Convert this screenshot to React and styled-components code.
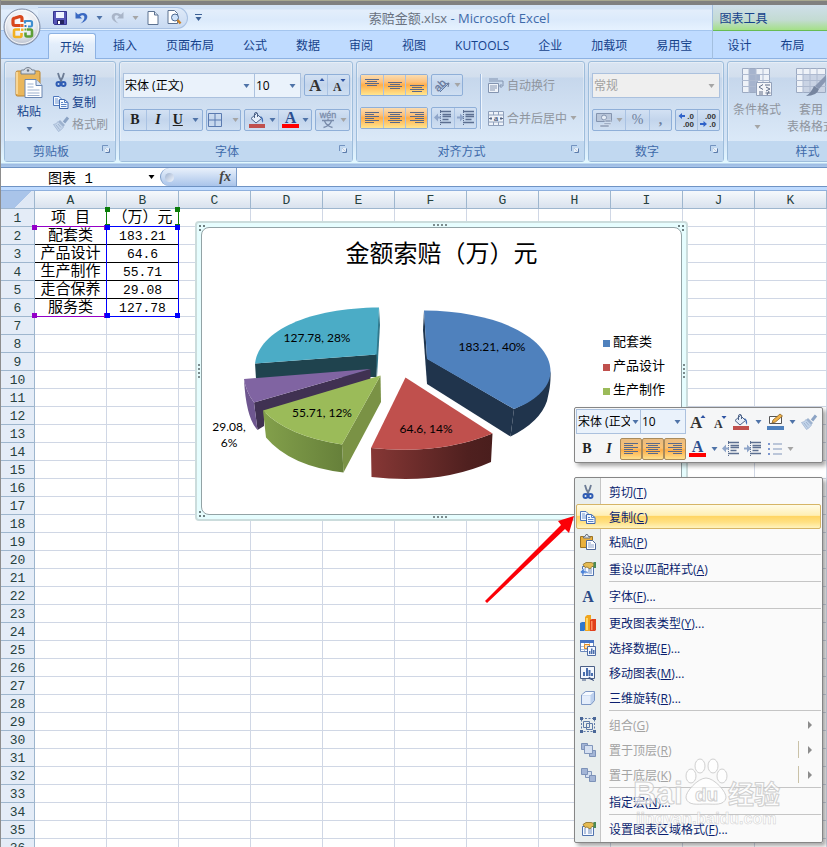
import React from 'react';
import styled, { createGlobalStyle, css } from 'styled-components';

const GlobalStyle = createGlobalStyle`
  * {
    box-sizing: border-box;
  }
  body {
    margin: 0;
    overflow: hidden;
    font-family: 'Open Sans', 'Noto Sans CJK SC', sans-serif;
    font-size: 12px;
    color: #15428b;
  }
  button, select, input {
    font: inherit;
    color: inherit;
    margin: 0;
    padding: 0;
    border: 0;
    background: none;
  }
  svg {
    display: block;
    flex: none;
    overflow: visible;
  }
`;

/* ---------- icons ---------- */

const Caret = ({ color = '#4f73a8' }) => (
  <svg width="7" height="4" viewBox="0 0 7 4">
    <path d="M0.5 0h6L3.5 4z" fill={color} />
  </svg>
);

const OfficeLogo = () => (
  <svg width="38" height="38" viewBox="0 0 38 38">
    <defs>
      <radialGradient id="orb" cx="0.5" cy="0.35" r="0.65">
        <stop offset="0" stopColor="#fff" />
        <stop offset="0.6" stopColor="#e9ebf0" />
        <stop offset="1" stopColor="#b4bccb" />
      </radialGradient>
    </defs>
    <circle cx="19" cy="19" r="18" fill="url(#orb)" stroke="#7e8ca6" />
    <circle cx="19" cy="19" r="16.5" fill="none" stroke="#fff" strokeOpacity="0.8" />
    <g fill="none" strokeLinejoin="round">
      <path d="M17.500 17.500H12q-2 0-2-2V12q0-2 2-2l5-1.500q2 0 2 2V14" stroke="#d9471c" strokeWidth="3.200" />
      <path d="M22 15.500V13h5.500q1.500 0 1.500 1.500v3q0 1-1.500 1H25" stroke="#3f8fd0" strokeWidth="2.200" />
      <path d="M17 21.500h-4.500q-1.500 0-1.500 1.500v4.500q0 1.500 1.500 1.500H17q1.500 0 1.500-1.500V25" stroke="#f2b01f" strokeWidth="2.600" />
      <path d="M24 21.500h3.500q1.500 0 1.500 1.500v4q0 1.500-1.500 1.500H24q-1.500 0-1.500-1.500v-2.500" stroke="#5d9f35" strokeWidth="2.600" />
    </g>
    <path d="M17.500 16h3v3h-3z" fill="#e8642a" />
    <path d="M21.500 17h2v2h-2z" fill="#2f7cc4" />
    <path d="M18 20.500h2.500v2.500H18z" fill="#f3b52c" />
    <path d="M21.500 20.500h2v2h-2z" fill="#67a83a" />
  </svg>
);

const SaveIcon = () => (
  <svg width="14" height="14" viewBox="0 0 14 14">
    <path d="M0.5 0.5h13v13h-12l-1-1z" fill="#5554b6" stroke="#35348f" />
    <path d="M3 1h8v6H3z" fill="#eef3ff" />
    <path d="M4 9h7v4H4z" fill="#23235f" />
    <path d="M5 10h2v3H5z" fill="#fff" />
  </svg>
);

const UndoIcon = ({ color = '#3a69c2', flip }) => (
  <svg width="13" height="14" viewBox="0 0 13 14">
    <g transform={flip ? 'translate(13 0) scale(-1 1)' : undefined}>
      <path d="M0.5 1v6.5h6.5L5 5.3Q8 3 9.3 5.500Q10 9 5.500 12.500Q13 10 12.300 5Q10.500 0 3 3.400z" fill={color} />
    </g>
  </svg>
);

const PageIcon = () => (
  <svg width="12" height="14" viewBox="0 0 12 14">
    <path d="M1 0.5h6.500l3.500 3.500v9.500H1z" fill="#fff" stroke="#5c7291" />
    <path d="M7.500 0.500v3.500H11" fill="#d6e1f0" stroke="#5c7291" />
  </svg>
);

const PreviewIcon = () => (
  <svg width="15" height="15" viewBox="0 0 15 15">
    <path d="M1 0.500h6.500l3 3v10H1z" fill="#fff" stroke="#5c7291" />
    <circle cx="8" cy="7.500" r="3.500" fill="#cfe3fa" stroke="#4c6890" />
    <path d="M10.500 10l3 3.500" stroke="#c9822b" strokeWidth="2.500" />
  </svg>
);

const CutIcon = () => (
  <svg width="16" height="16" viewBox="0 0 16 16">
    <path d="M5 1q1 5 4 9M11 1q-1 5-4 9" stroke="#6c7c95" strokeWidth="1.800" fill="none" />
    <circle cx="5.500" cy="12" r="2" fill="none" stroke="#2f5cb4" strokeWidth="2" />
    <circle cx="10.500" cy="12" r="2" fill="none" stroke="#2f5cb4" strokeWidth="2" />
  </svg>
);

const CopyIcon = () => (
  <svg width="16" height="16" viewBox="0 0 16 16">
    <path d="M0.500 2.500h5.500l2.500 2.500v6.500h-8z" fill="#f4f9ff" stroke="#4f78bd" />
    <path d="M2 5h3M2 7h4M2 9h4" stroke="#7297d0" />
    <path d="M6.500 5.500h5l3.500 3v6H6.500z" fill="#f4f9ff" stroke="#3e67ae" />
    <path d="M11.500 5.500v3H15M8 8.500h2M8 10.500h5.500M8 12.500h5.500" fill="none" stroke="#5b84c6" />
  </svg>
);

const BrushIcon = () => (
  <svg width="16" height="16" viewBox="0 0 16 16">
    <path d="M15 1.500l-4 5" stroke="#8ba3c4" strokeWidth="3" />
    <path d="M7 4l5 5-2 2-5-5z" fill="#9db2ce" />
    <path d="M5 5.500l5.500 5.500q-2 3-5 4.500L0.500 8.500q3 0 4.500-3z" fill="#c4d5ea" stroke="#9fb4d0" strokeWidth="0.800" />
    <path d="M3 9l3.500 4.500M5 8l3 3.500" stroke="#9fb4d0" />
  </svg>
);

const PasteIcon = ({ size = 16 }) => (
  <svg width={size} height={size} viewBox="0 0 32 32">
    <rect x="3" y="4" width="24" height="25" rx="1.500" fill="#eab65a" stroke="#b98331" />
    <path d="M4 27V5" stroke="#f8d695" strokeWidth="2" />
    <path d="M8 7V4q0-1 1-1h2q1-2.500 4-2.500T19 3h2q1 0 1 1v3z" fill="#d5dbe4" stroke="#77818f" />
    <circle cx="15" cy="3.500" r="1.200" fill="#69727f" />
    <path d="M12 12.500h11l6 6v12H12z" fill="#fff" stroke="#6a86b1" />
    <path d="M23 12.500v6h6" fill="#dbe6f5" stroke="#6a86b1" />
    <path d="M14.500 17h6M14.500 20h6M14.500 23h12M14.500 26h12M14.500 28.500h12" stroke="#9db1cf" />
  </svg>
);

const SmallPasteIcon = () => (
  <svg width="16" height="16" viewBox="0 0 16 16">
    <path d="M0.500 2.500h12v11h-12z" fill="#e9b03d" stroke="#9c7322" />
    <path d="M3.500 4V2.500H5L6 0.500h1.500l1 2H10V4z" fill="#dfe4ea" stroke="#69727f" />
    <path d="M6.500 6.500h6l3 3v6h-9z" fill="#fff" stroke="#50699a" />
    <path d="M8 9h3M8 11h6M8 13h6" stroke="#8da4cc" />
  </svg>
);

const BordersIcon = () => (
  <svg width="14" height="14" viewBox="0 0 14 14">
    <path d="M0.500 0.500h13v13h-13zM7 0v14M0 7h14" fill="none" stroke="#5a7ab0" />
  </svg>
);

const FillIcon = () => (
  <svg width="18" height="16" viewBox="0 0 18 16">
    <path d="M3 6.500L8.500 1.500l5 5L8 11z" fill="#e6eef9" stroke="#4d6388" />
    <path d="M6.500 6V2q0-1.500 1.500-1.500T9.500 2v3" fill="none" stroke="#4d6388" />
    <path d="M12 4q4 1 3 7q-1.500-1-1.500-4.500z" fill="#3e6db8" />
    <path d="M1 12h16v4H1z" fill="#c0504d" />
  </svg>
);

const LineColorIcon = () => (
  <svg width="17" height="16" viewBox="0 0 17 16">
    <path d="M2.500 2.500h12v7h-12z" fill="#fff" stroke="#555" />
    <path d="M5 9l1-3 7-6 2.500 2-7 6z" fill="#f0b24a" stroke="#8a6323" strokeWidth="0.800" />
    <path d="M0 12h17v4H0z" fill="#4f81bd" />
  </svg>
);

const FontColorIcon = () => (
  <svg width="17" height="17" viewBox="0 0 17 17">
    <text x="8.500" y="12" textAnchor="middle" fontFamily="Liberation Serif" fontWeight="bold" fontSize="16" fill="#2c4f8f">A</text>
    <path d="M0 13h17v4H0z" fill="#f00" />
  </svg>
);

const SizeIcon = ({ small }) => (
  <svg width="17" height="16" viewBox="0 0 17 16">
    <text x={small ? 3 : 1} y="14" fontFamily="Liberation Serif" fontWeight="bold" fontSize={small ? 12 : 17} fill="#333">A</text>
    {small ? <path d="M10.500 2h5L13 5z" fill="#2e54a3" /> : <path d="M11.500 4h5L14 1z" fill="#2e54a3" />}
  </svg>
);

const PhoneticIcon = () => (
  <svg width="18" height="17" viewBox="0 0 18 17">
    <text x="9" y="7" textAnchor="middle" fontSize="9" fontFamily="Liberation Sans" fill="#7a8cab" stroke="#7a8cab" strokeWidth="0.300">wén</text>
    <path d="M3 9.500h12M9 7.500v2M5.500 10q2 5 8 6.500M12.500 10q-2 5-8 6.500" fill="none" stroke="#7a8cab" strokeWidth="1.300" />
  </svg>
);

/* text lines of the alignment buttons */
const lineSets = {
  top: ['M1 2h14', 'M3 4h10', 'M1 6h14', 'M3 8h10'],
  middle: ['M1 5h14', 'M3 7h10', 'M1 9h14', 'M3 11h10'],
  bottom: ['M1 8h14', 'M3 10h10', 'M1 12h14', 'M3 14h10'],
  left: ['M1 2h14', 'M1 4h9', 'M1 6h14', 'M1 8h9', 'M1 10h14', 'M1 12h9'],
  center: ['M1 2h14', 'M3 4h10', 'M1 6h14', 'M3 8h10', 'M1 10h14', 'M3 12h10'],
  right: ['M1 2h14', 'M6 4h9', 'M1 6h14', 'M6 8h9', 'M1 10h14', 'M6 12h9'],
};

const LinesIcon = ({ kind }) => (
  <svg width="16" height="16" viewBox="0 0 16 16" shapeRendering="crispEdges">
    <g transform="translate(0 0.5)">
      <path d={lineSets[kind].join('')} stroke="#59698a" fill="none" />
    </g>
  </svg>
);

const IndentIcon = ({ more }) => (
  <svg width="18" height="16" viewBox="0 0 18 16">
    <path d="M6 1.500h11M8.500 4.500h8.500M8.500 6.500h8.500M8.500 9.500h6M6 12.500h11" stroke="#5c6f91" strokeWidth="1.300" />
    <path d="M6.500 0v15" stroke="#5c6f91" strokeDasharray="1 1" />
    {more ? <path d="M0 6.500h3v-3l4 4-4 4v-3H0z" fill="#8fa5c9" /> : <path d="M7 6.500H4v-3l-4 4 4 4v-3h3z" fill="#8fa5c9" />}
  </svg>
);

const BulletsIcon = () => (
  <svg width="14" height="14" viewBox="0 0 14 14">
    <path d="M5 2h9M5 7h9M5 12h9" stroke="#8196bb" />
    <path d="M0 1h2v2H0zM0 6h2v2H0zM0 11h2v2H0z" fill="#7d97cf" />
  </svg>
);

const OrientIcon = () => (
  <svg width="17" height="16" viewBox="0 0 17 16">
    <text x="0" y="13" transform="rotate(-45 5 9)" fontSize="11" fontFamily="Liberation Sans" fill="#68799c" stroke="#68799c" strokeWidth="0.300">ab</text>
    <path d="M6 15l9-9M15 6l-4 1M15 6l-1 4" fill="none" stroke="#68799c" />
  </svg>
);

const WrapIcon = () => (
  <svg width="16" height="15" viewBox="0 0 16 15">
    <path d="M1 1h9M1 3h11" stroke="#8394b0" />
    <path d="M0.500 5.500h10v9h-10z" fill="#f0f4fa" stroke="#8394b0" />
    <path d="M2 8h7M2 10h7M2 12h5" stroke="#8394b0" />
    <path d="M12 3h3v5h-3M13.500 6l-2 2 2 2" fill="none" stroke="#8394b0" />
  </svg>
);

const MergeIcon = () => (
  <svg width="16" height="15" viewBox="0 0 16 15">
    <path d="M0.500 0.500h15v14h-15zM0 4h16M0 11h16M5.500 0v4M10.500 0v4M5.500 11v4M10.500 11v4" fill="#eef3fa" stroke="#8fa0bb" />
    <text x="8" y="10" textAnchor="middle" fontSize="9" fontWeight="bold" fontFamily="Liberation Serif" fill="#566784">a</text>
    <path d="M1 7.500h3M12 7.500h3M3 6v3M13 6v3" stroke="#566784" />
  </svg>
);

const CurrencyIcon = () => (
  <svg width="17" height="16" viewBox="0 0 17 16">
    <path d="M0.500 1.500h15v8h-15z" fill="#b9c6da" stroke="#8494af" />
    <circle cx="8" cy="5.500" r="2.500" fill="#e6edf7" stroke="#8494af" />
    <path d="M9 8h6v2H9zM8 11h7v1.500H8zM4 13h9v2H4z" fill="#8a9ab5" stroke="#dfe7f3" strokeWidth="0.500" />
  </svg>
);

const DecimalIcon = ({ less }) => (
  <svg width="17" height="16" viewBox="0 0 17 16">
    <g fontFamily="Liberation Sans" fontWeight="bold" fontSize="8" fill="#333" textAnchor="end">
      <text x="16" y="7">{less ? '.00' : '.0'}</text>
      <text x="16" y="15">{less ? '.0' : '.00'}</text>
    </g>
    {less
      ? <path d="M0 11h3.500V9l3.500 3-3.500 3v-2H0z" fill="#2f62c9" />
      : <path d="M7 3H4V1L0.500 4 4 7V5h3z" fill="#2f62c9" />}
  </svg>
);

const CondIcon = () => (
  <svg width="32" height="30" viewBox="0 0 32 30">
    <path d="M1.500 1.500h27v24h-27z" fill="#eef2f8" stroke="#9caac2" />
    <path d="M8 2h7v5H8zM8 7h11v6H8zM8 13h9v6H8zM8 19h7v6H8z" fill="#a5b3cd" />
    <path d="M1 7.500h28M1 13.500h28M1 19.500h28M8 1v25M15 1v25M22 1v25" stroke="#aebad0" />
    <path d="M15.500 15.500h15v13h-15z" fill="#f3f5f9" stroke="#93a1ba" />
    <path d="M22 17.500l-4 2.500 4 2.500M18 25h4M18 27h4M25 24l4-2-4-2M24.500 26h5M26 28l2-4M24 18h5" fill="none" stroke="#5d6b86" />
  </svg>
);

const TableFormatIcon = () => (
  <svg width="32" height="30" viewBox="0 0 32 30">
    <path d="M1.500 1.500h29v24h-29z" fill="#eef2f8" stroke="#9caac2" />
    <path d="M8 7h22v18H8z" fill="#c9d3e4" />
    <path d="M1 7.500h30M1 13.500h30M1 19.500h30M8 1v25M15 1v25M22 1v25" stroke="#aebad0" />
    <path d="M31 8L20 19l4 3 7-8z" fill="#8997b2" />
    <path d="M19 19l5 3q-2 7-13 7 5-3 8-10z" fill="#76859f" />
  </svg>
);

const LauncherIcon = () => (
  <svg width="8" height="8" viewBox="0 0 8 8">
    <path d="M0.500 6V0.500H6" fill="none" stroke="#7393c0" />
    <path d="M3 3l4 4M7.500 3.500v4h-4" fill="none" stroke="#5a7bab" />
    <path d="M3 3h4v4H3z" fill="#fff" fillOpacity="0.600" />
  </svg>
);

const PropsIcon = ({ arrow }) => (
  <svg width="16" height="16" viewBox="0 0 16 16">
    <path d="M2.500 5.500h11v9h-11z" fill="#f6f9fe" stroke="#4e72ae" />
    <path d="M4 8h2M4 10h2M4 12h2M8 8h4M8 10h4M8 12h4" stroke="#6e8dc0" />
    <path d="M3 3.500l3-2h5l3 1v3l-2 0-2 2.500-3-2-2 0.500z" fill="#e5bb52" stroke="#8c6d27" strokeWidth="0.800" />
    <path d="M13.500 1H16v6h-2.500z" fill="#4b8a55" />
    {arrow && <path d="M0 11l4-4v2.500q4 0 5 3.500-2-1.500-5-1v2.500z" fill="#4c83d8" stroke="#fff" strokeWidth="0.500" />}
  </svg>
);

const LetterIcon = () => (
  <svg width="16" height="16" viewBox="0 0 16 16">
    <text x="8" y="14" textAnchor="middle" fontFamily="Liberation Serif" fontWeight="bold" fontSize="16" fill="#2b4a86">A</text>
  </svg>
);

const ChartTypeIcon = () => (
  <svg width="16" height="16" viewBox="0 0 16 16">
    <path d="M0 8l2-1h3v8l-1 1H0z" fill="#2f78cf" />
    <path d="M5 2l2-2h4v15l-1 1H5z" fill="#f0a51e" />
    <path d="M6 3h2v12H6z" fill="#ffd768" />
    <path d="M10 5l2-1h4v11l-1 1h-5z" fill="#e0401c" />
    <path d="M11 6h1.500v9H11z" fill="#ff8b5f" />
  </svg>
);

const SelectDataIcon = () => (
  <svg width="16" height="16" viewBox="0 0 16 16">
    <path d="M0.500 0.500h13v11h-13z" fill="#fff" stroke="#6a88bd" />
    <path d="M0 0h14v3H0z" fill="#4673c4" />
    <path d="M1 6.500h12M1 9.500h12M4.500 3v8M9.500 3v8" stroke="#a9bbda" />
    <path d="M4.500 4.500h5v4h-5z" fill="#ffe0b0" stroke="#e58b22" />
    <path d="M7.500 6.500h8v9h-8z" fill="#f4f8ff" stroke="#4e6ca4" />
    <path d="M9 11h1.500v3H9zM11 8.500h1.500V14H11zM13 10h1.500v4H13z" fill="#4a6fae" />
  </svg>
);

const MoveChartIcon = () => (
  <svg width="16" height="16" viewBox="0 0 16 16">
    <path d="M0.500 1.500h14v12h-14z" fill="#f3f7fd" stroke="#4a5f86" />
    <path d="M3 7h2v4H3zM6 3h2v8H6zM8.500 5h2v6h-2zM11 8h2v3h-2z" fill="#4a6fae" />
    <path d="M2 15h4M8 13l6 2.500M9 12l4 3" stroke="#3d5280" />
  </svg>
);

const CubeIcon = () => (
  <svg width="16" height="16" viewBox="0 0 16 16">
    <path d="M1.500 5l4-3.500h9v9l-3.500 4h-9.500z" fill="#bcd0ee" stroke="#7d97c4" />
    <path d="M2 5.500h8.500v8.500H2z" fill="#e5eefb" />
    <path d="M2 5l4-3h8l-3.500 3z" fill="#f6faff" />
  </svg>
);

const GroupIcon = () => (
  <svg width="16" height="16" viewBox="0 0 16 16">
    <path d="M1.500 1.500h13v13h-13z" fill="none" stroke="#5f7ba8" strokeDasharray="2 1.500" />
    <path d="M3.500 4.500h6v6h-6zM6.500 6.500h6v6h-6z" fill="none" stroke="#5f7ba8" />
    <path d="M0 0h3v3H0zM13 0h3v3h-3zM0 13h3v3H0zM13 13h3v3h-3z" fill="#4a6797" />
  </svg>
);

const FrontIcon = ({ back }) => {
  const small = (
    <>
      <path d="M1.500 1.500h6v6h-6z" fill="#a3b5d6" stroke="#7d92b8" />
      <path d="M9.500 8.500h6v6h-6z" fill="#a3b5d6" stroke="#7d92b8" />
    </>
  );
  return (
    <svg width="16" height="16" viewBox="0 0 16 16">
      {!back && small}
      <path d={back ? 'M5.500 4.500h6v6h-6z' : 'M4.500 3.500h8v8h-8z'} fill="#d5e0f1" stroke="#8196bb" />
      {back && small}
    </svg>
  );
};

/* ---------- window header ---------- */

const Window = styled.div`
  display: flex;
  flex-direction: column;
  height: 100vh;
  overflow: hidden;
  background: #bfdbff;
  border-left: 1px solid #8d8d8d;
`;

const Desktop = styled.div`
  flex: none;
  height: 5px;
  background: #808080;
  border-top: 1px solid #a8a890;
`;

const Header = styled.header`
  position: relative;
  display: flex;
  flex: none;
`;

const MainHeader = styled.div`
  flex: none;
`;

const titleBar = css`
  display: flex;
  align-items: center;
  height: 26px;
  border-bottom: 1px solid #a4c5ee;
`;

const TitleBar = styled.div`
  ${titleBar}
  background: linear-gradient(#d3e3f6 0 4px, #e3eefb 5px, #dbeafb 60%, #e6f2ff);
`;

const OfficeButton = styled.button`
  position: absolute;
  left: 2px;
  top: 3px;
`;

const QuickAccess = styled.div`
  display: flex;
  align-items: center;
  gap: 8px;
  width: 150px;
  height: 22px;
  margin-left: 37px;
  padding-left: 15px;
  border: 1px solid #a9c1e2;
  border-left: 0;
  border-radius: 0 12px 12px 0;
  background: linear-gradient(#dfeaf8, #c8daf2);
`;

const CustomizeQuick = styled.button`
  margin-left: 7px;
  padding-top: 2px;
  border-top: 1px solid #3d6195;
`;

const Title = styled.h1`
  flex: 1;
  margin: 0;
  padding-left: 4px;
  text-align: center;
  font-size: 13px;
  font-weight: normal;
  color: #3e6aaa;

  span {
    color: #6a7280;
  }
`;

const TabList = styled.nav`
  display: flex;
  align-items: flex-end;
  gap: 5px;
  height: 28px;
  padding: 0 8px 0 47px;
  border-bottom: 1px solid #8db2e3;
`;

const Tab = styled.button`
  height: 26px;
  padding: 0 12px;
  white-space: nowrap;

  ${({ $active }) => $active && css`
    margin-bottom: -1px;
    padding: 0 11px;
    border: 1px solid #8db2e3;
    border-bottom: 0;
    border-radius: 3px 3px 0 0;
    background: linear-gradient(#fff, #e3eefb 40%, #dae7f5);
  `}
`;

const ContextHeader = styled.div`
  flex: 1;
  overflow: hidden;
  border-left: 1px solid #a3bfdf;

  nav {
    padding-left: 2px;
  }
`;

const ContextTitle = styled.div`
  ${titleBar}
  padding: 0 6px;
  background: linear-gradient(#cfdfeb, #c3dbd2 60%, #a4e087);
  border-bottom: 1px solid #67bb55;
`;

/* ---------- ribbon ---------- */

const Ribbon = styled.div`
  display: flex;
  flex: none;
  gap: 3px;
  height: 108px;
  padding: 2px 0 5px 3px;
  overflow: hidden;
  background: linear-gradient(#dbe7f5, #ccdcf0 18px, #d3e3f6 80px, #e2f6ff 102px, #e2f9ff 104px, #9dbbe2 105px, #a9c6ea);
`;

const GroupBox = styled.section`
  display: flex;
  flex: none;
  flex-direction: column;
  width: ${({ $width }) => $width}px;
  border: 1px solid #9ebddb;
  border-radius: 3px;
  background: linear-gradient(#dae5f2, #d2deed 15px, #c6d7ec 16px, #dbe9f8 80px);
  box-shadow: inset 0 0 0 1px rgba(255, 255, 255, 0.35);
`;

const GroupBody = styled.div`
  display: flex;
  flex: 1;
  align-items: center;
  padding: 0 3px;
`;

const GroupLabel = styled.footer`
  display: flex;
  align-items: center;
  height: 20px;
  padding-right: 5px;
  background: #c1d8f0;
  color: #3e6aaa;

  span {
    flex: 1;
    text-align: center;
  }
  button {
    margin-left: 5px;
    padding-bottom: 5px;
  }
`;

const Rows = styled.div`
  display: flex;
  flex-direction: column;
  gap: 11px;
`;

const Row = styled.div`
  display: flex;
  align-items: center;
  gap: 3px;
`;

const Combo = styled.div`
  position: relative;
  display: flex;
  width: ${({ $width }) => $width}px;
  height: 25px;
  border: 1px solid #abc1de;
  background: ${({ $disabled }) => ($disabled ? '#efefef' : '#eaf2fb')};
  color: ${({ $disabled }) => ($disabled ? '#a0a0a0' : '#000')};

  & + & {
    margin-left: -4px;
  }
  select {
    flex: 1;
    min-width: 0;
    margin-right: 13px;
    padding-left: 1px;
    appearance: none;
    outline: none;
    opacity: 1;
  }
  svg {
    position: absolute;
    right: 4px;
    top: 10px;
  }
`;

const ButtonSet = styled.div`
  display: flex;
  height: 22px;
  border: 1px solid #8fafd8;
  border-radius: 2px;
  background: linear-gradient(#d3e1f3, #c3d5ec 50%, #cfdff2);

  & > button + button {
    border-left: 1px solid #a9c2e3;
  }
`;

const ToolButton = styled.button`
  display: flex;
  align-items: center;
  justify-content: center;
  gap: 3px;
  width: ${({ $width = 22 }) => $width}px;
  color: ${({ $dim }) => ($dim ? '#6f7f9c' : '#222')};
  font-family: 'Liberation Serif', serif;
  font-size: 14px;

  ${({ $on }) => $on && css`
    background: linear-gradient(#fbdcb0, #fcc17c 35%, #ffae4a 50%, #ffe58f);
  `}
`;

const Divider = styled.div`
  align-self: center;
  width: 2px;
  height: 55px;
  margin: 0 6px 0 3px;
  background: #9db8dc;
  border-right: 1px solid #eef5fd;
`;

const TextTool = styled.button`
  display: flex;
  align-items: center;
  gap: 3px;
  height: 22px;
  white-space: nowrap;
  color: ${({ $disabled }) => ($disabled ? '#8f959e' : '#15428b')};
`;

const BigTool = styled.button`
  display: flex;
  flex: none;
  flex-direction: column;
  align-items: center;
  align-self: flex-start;
  width: ${({ $width }) => $width}px;
  padding-top: 5px;
  line-height: 17px;
  color: ${({ $disabled }) => ($disabled ? '#8f959e' : '#15428b')};

  & > svg:first-child {
    margin-bottom: 4px;
  }
  & > svg:last-child {
    margin-top: 7px;
  }
`;

const Stack = styled.div`
  padding-left: 3px;
`;

/* ---------- formula bar ---------- */

const FormulaBar = styled.div`
  display: flex;
  flex: none;
  height: 20px;
  border: solid #6f93c4;
  border-width: 1px 0;
  background: #fff;
`;

const NameBox = styled.label`
  display: flex;
  align-items: center;
  width: 159px;
  padding-right: 5px;

  input {
    flex: 1;
    min-width: 0;
    padding-right: 8px;
    outline: none;
    text-align: center;
    color: #000;
    font: 14px 'Liberation Mono', 'Noto Sans CJK SC', monospace;
  }
`;

const FxHandle = styled.button`
  display: flex;
  align-items: center;
  justify-content: space-between;
  width: 77px;
  padding: 0 5px 0 4px;
  border: solid #7d9dc9;
  border-width: 0 1px;
  border-radius: 9px 0 0 9px;
  background: linear-gradient(#e9f1fb, #a9c4ea);
  color: #444;
  font: italic bold 14px 'Liberation Serif', serif;

  i {
    width: 9px;
    height: 9px;
    border-radius: 50%;
    background: linear-gradient(135deg, #9fb2cf, #f3f7fd);
  }
`;

const FormulaInput = styled.input`
  flex: 1;
  outline: none;
`;

/* ---------- sheet ---------- */

const SheetArea = styled.main`
  position: relative;
  flex: 1;
  min-height: 0;
  margin-top: 3px;
  overflow: hidden;
  border-top: 1px solid #8fb0dd;
  background: #fff;
`;

const Sheet = styled.table`
  width: 0;
  border-collapse: separate;
  border-spacing: 0;
  table-layout: fixed;
  font-family: 'Liberation Mono', 'Noto Sans CJK SC', monospace;
  font-size: 13px;
  color: #000;

  col {
    width: 72px;
  }
  col:first-child {
    width: 34px;
  }
  th, td {
    height: 18px;
    padding: 3px 0 0;
    text-align: center;
    font-weight: normal;
    line-height: 14px;
    white-space: nowrap;
    border: solid #d0d7e5;
    border-width: 0 1px 1px 0;
  }
  th {
    border-color: #9eb6ce;
    background: #e4ecf7;
    color: #27413e;
  }
  thead th {
    background: linear-gradient(#f6f9fc, #d9e2ee);
  }
  thead th:first-child {
    background: linear-gradient(135deg, #a9c4e9 62%, #dfe8f5 62%);
  }
`;

const Cell = styled.td`
  && {
    ${({ $boxed }) => $boxed && 'border-color: #000;'}
    ${({ $cjk }) => $cjk && 'font-size: 15px;'}
  }
`;

const Range = styled.div`
  position: absolute;
  left: ${({ $x }) => $x}px;
  top: ${({ $y }) => $y}px;
  width: 73px;
  height: ${({ $h }) => $h}px;
  border: 1px solid ${({ $color }) => $color};
  border-width: ${({ $sides }) => $sides || '1px'};
  pointer-events: none;

  i {
    position: absolute;
    width: 5px;
    height: 5px;
    background: ${({ $color }) => $color};
  }
  i:nth-child(1) { left: -2px; top: -2px; }
  i:nth-child(2) { right: -2px; top: -2px; }
  i:nth-child(3) { left: -2px; bottom: -2px; }
  i:nth-child(4) { right: -2px; bottom: -2px; }
`;

const ChartFrame = styled.div`
  position: absolute;
  left: 194px;
  top: 30px;
  width: 493px;
  height: 300px;
  padding: 4px;
  border: 2px solid #cbdcdc;
  border-radius: 4px;
  background: #e6fdfe;
`;

const ChartBox = styled.figure`
  position: relative;
  height: 100%;
  margin: 0;
  border: 1px solid #93a3a6;
  border-radius: 8px;
  background: #fff;
`;

const Grip = styled.i`
  position: absolute;
  width: ${({ $v }) => ($v ? 2 : 14)}px;
  height: ${({ $v }) => ($v ? 14 : 2)}px;
  background: repeating-linear-gradient(${({ $v }) => ($v ? '180deg' : '90deg')}, #7c8c8e 0 2px, transparent 2px 4px);
`;

/* three dots in each corner of the frame */
const Corners = styled.svg`
  position: absolute;
  left: 0;
  top: 0;
`;

const ChartTitle = styled.figcaption`
  padding-top: 8px;
  text-align: center;
  font: 24px/32px 'Noto Sans CJK SC', sans-serif;
  color: #000;
`;

const Pie = styled.svg`
  position: absolute;
  left: -1px;
  top: 72px;

  text {
    font-family: Lato, sans-serif;
    font-size: 12px;
    text-anchor: middle;
    fill: #000;
  }
`;

const Legend = styled.ul`
  position: absolute;
  left: 401px;
  top: 101px;
  margin: 0;
  padding: 0;
  list-style: none;
  font-size: 13px;
  line-height: 24px;
  color: #000;
`;

const LegendItem = styled.li`
  display: flex;
  align-items: center;
  gap: 3px;

  &::before {
    content: '';
    width: 7px;
    height: 7px;
    margin-top: 5px;
    background: ${({ $color }) => $color};
  }
`;

const Arrow = styled.svg`
  position: absolute;
  left: 482px;
  top: 321px;
`;

/* ---------- popups ---------- */

const popup = css`
  position: absolute;
  left: 573px;
  width: 249px;
  border: 1px solid #868686;
  border-radius: 2px;
  background: #fafafa;
  box-shadow: 3px 3px 4px rgba(0, 0, 0, 0.35);
`;

const MiniToolbar = styled.div`
  ${popup}
  top: 216px;
  display: flex;
  flex-direction: column;
  gap: 2px;
  padding: 1px;
  background: #f5f6f7;
`;

const MiniRow = styled.div`
  display: flex;
  align-items: center;
  height: 25px;

  & > div + div {
    margin-left: -1px;
  }
`;

const MiniButton = styled(ToolButton)`
  height: 22px;
  gap: 5px;

  ${({ $on }) => $on && css`
    border: 1px solid #a98b5c;
    border-radius: 2px;
    background: linear-gradient(#e9bb80, #fcc272 45%, #fdad48 55%, #fee08d);
  `}
`;

const Menu = styled.ul`
  ${popup}
  top: 286px;
  margin: 0;
  padding: 1px;
  list-style: none;
  background: linear-gradient(90deg, #e9eeee 25px, #c5c5c5 25px 26px, #fafafa 26px);
  color: #0b1f6f;

  hr {
    height: 2px;
    margin: 0 0 0 33px;
    border: 0;
    border-top: 1px solid #c5c5c5;
  }
`;

const MenuItem = styled.button`
  display: flex;
  align-items: center;
  gap: 13px;
  width: 100%;
  height: 25px;
  padding: 0 8px 0 3px;
  border: 1px solid transparent;
  text-align: left;

  span {
    flex: 1;
  }
  ${({ disabled }) => disabled && 'color: #a3a3a3;'}
  ${({ $hot }) => $hot && css`
    border-color: #d6b566;
    border-radius: 2px;
    background: linear-gradient(#fffbe6, #ffefb4 45%, #ffd564 50%, #ffe184 75%, #fff3bd);
  `}
`;

const SubArrow = styled.i`
  display: flex;
  align-items: center;
  height: 17px;
  padding-left: 9px;
  border-left: 1px solid ${({ $split }) => ($split ? '#cac2a8' : 'transparent')};
`;

const Watermark = styled.svg`
  position: absolute;
  left: 630px;
  top: 562px;
  pointer-events: none;

  text, ellipse, path {
    fill: #fff;
    fill-opacity: 0.7;
    stroke: #c4c4c4;
    stroke-opacity: 0.8;
    font-family: 'Liberation Sans', 'Noto Sans CJK SC', sans-serif;
    font-weight: bold;
  }
`;

/* ---------- data ---------- */

const tabs = ['开始', '插入', '页面布局', '公式', '数据', '审阅', '视图', 'KUTOOLS', '企业', '加载项', '易用宝'];
const contextTabs = ['设计', '布局'];
const columns = 'ABCDEFGHIJKLMNOPQRSTUVWXYZ'.split('');

const cells = [
  ['项 目', '（万）元'],
  ['配套类', '183.21'],
  ['产品设计', '64.6'],
  ['生产制作', '55.71'],
  ['走合保养', '29.08'],
  ['服务类', '127.78'],
];

const legend = [
  ['配套类', '#4f81bd'],
  ['产品设计', '#c0504d'],
  ['生产制作', '#9bbb59'],
];

const menu = [
  { text: '剪切', hotkey: 'T', icon: <CutIcon /> },
  { text: '复制', hotkey: 'C', icon: <CopyIcon />, hot: true },
  { text: '粘贴', hotkey: 'P', icon: <SmallPasteIcon /> },
  null,
  { text: '重设以匹配样式', hotkey: 'A', icon: <PropsIcon arrow /> },
  null,
  { text: '字体', hotkey: 'F', dots: true, icon: <LetterIcon /> },
  null,
  { text: '更改图表类型', hotkey: 'Y', dots: true, icon: <ChartTypeIcon /> },
  { text: '选择数据', hotkey: 'E', dots: true, icon: <SelectDataIcon /> },
  { text: '移动图表', hotkey: 'M', dots: true, icon: <MoveChartIcon /> },
  { text: '三维旋转', hotkey: 'R', dots: true, icon: <CubeIcon /> },
  null,
  { text: '组合', hotkey: 'G', disabled: true, sub: true, icon: <GroupIcon /> },
  { text: '置于顶层', hotkey: 'R', disabled: true, sub: true, split: true, icon: <FrontIcon /> },
  { text: '置于底层', hotkey: 'K', disabled: true, sub: true, split: true, icon: <FrontIcon back /> },
  null,
  { text: '指定宏', hotkey: 'N', dots: true, icon: <svg width="16" height="16" /> },
  null,
  { text: '设置图表区域格式', hotkey: 'F', dots: true, icon: <PropsIcon /> },
];

/* ---------- parts ---------- */

const GREY = '#a5a5a5';

const ComboBox = ({ label, value, width, disabled }) => (
  <Combo $width={width} $disabled={disabled}>
    <select aria-label={label} defaultValue={value} disabled={disabled}>
      <option>{value}</option>
    </select>
    <Caret color={disabled ? GREY : undefined} />
  </Combo>
);

const Group = ({ label, width, launcher = true, children }) => (
  <GroupBox $width={width}>
    <GroupBody>{children}</GroupBody>
    <GroupLabel>
      <span>{label}</span>
      {launcher && <button aria-label={`${label}选项`}><LauncherIcon /></button>}
    </GroupLabel>
  </GroupBox>
);

const AlignButtons = ({ kinds }) => (
  <ButtonSet>
    {kinds.map((kind) => (
      <ToolButton key={kind} $on aria-label={kind}><LinesIcon kind={kind} /></ToolButton>
    ))}
  </ButtonSet>
);

const AppHeader = () => (
  <Header>
    <MainHeader>
      <TitleBar>
        <QuickAccess>
          <button aria-label="保存"><SaveIcon /></button>
          <button aria-label="撤消"><UndoIcon /></button>
          <Caret />
          <button aria-label="恢复"><UndoIcon color="#a9b5c8" flip /></button>
          <Caret color={GREY} />
          <button aria-label="新建"><PageIcon /></button>
          <button aria-label="打印预览"><PreviewIcon /></button>
        </QuickAccess>
        <CustomizeQuick aria-label="自定义快速访问工具栏"><Caret color="#3d6195" /></CustomizeQuick>
        <Title><span>索赔金额.xlsx</span> - Microsoft Excel</Title>
      </TitleBar>
      <TabList>
        {tabs.map((tab, i) => <Tab key={tab} $active={i === 0}>{tab}</Tab>)}
      </TabList>
    </MainHeader>
    <ContextHeader>
      <ContextTitle>图表工具</ContextTitle>
      <TabList>
        {contextTabs.map((tab) => <Tab key={tab}>{tab}</Tab>)}
      </TabList>
    </ContextHeader>
    <OfficeButton aria-label="Office 按钮"><OfficeLogo /></OfficeButton>
  </Header>
);

const RibbonBar = () => (
  <Ribbon>
    <Group label="剪贴板" width={112}>
      <BigTool $width={42}>
        <PasteIcon size={32} />
        粘贴
        <Caret />
      </BigTool>
      <Stack>
        <TextTool><CutIcon />剪切</TextTool>
        <TextTool><CopyIcon />复制</TextTool>
        <TextTool $disabled><BrushIcon />格式刷</TextTool>
      </Stack>
    </Group>
    <Group label="字体" width={234}>
      <Rows>
        <Row>
          <ComboBox label="字体" value="宋体 (正文)" width={132} />
          <ComboBox label="字号" value="10" width={47} />
          <ButtonSet>
            <ToolButton aria-label="增大字号"><SizeIcon /></ToolButton>
            <ToolButton aria-label="减小字号"><SizeIcon small /></ToolButton>
          </ButtonSet>
        </Row>
        <Row>
          <ButtonSet>
            <ToolButton><b>B</b></ToolButton>
            <ToolButton $width={23}><b><i>I</i></b></ToolButton>
            <ToolButton $width={33}><b><u>U</u></b>&nbsp;<Caret /></ToolButton>
          </ButtonSet>
          <ButtonSet>
            <ToolButton $width={33} aria-label="边框"><BordersIcon />&nbsp;<Caret color={GREY} /></ToolButton>
          </ButtonSet>
          <ButtonSet>
            <ToolButton $width={33} aria-label="填充颜色"><FillIcon /><Caret /></ToolButton>
            <ToolButton $width={33} aria-label="字体颜色"><FontColorIcon /><Caret /></ToolButton>
          </ButtonSet>
          <ButtonSet>
            <ToolButton $width={33} aria-label="拼音"><PhoneticIcon /><Caret color={GREY} /></ToolButton>
          </ButtonSet>
        </Row>
      </Rows>
    </Group>
    <Group label="对齐方式" width={229}>
      <Rows>
        <Row>
          <AlignButtons kinds={['top', 'middle', 'bottom']} />
          <ButtonSet>
            <ToolButton $width={30} aria-label="方向"><OrientIcon /><Caret color={GREY} /></ToolButton>
          </ButtonSet>
        </Row>
        <Row>
          <AlignButtons kinds={['left', 'center', 'right']} />
          <ButtonSet>
            <ToolButton aria-label="减少缩进"><IndentIcon /></ToolButton>
            <ToolButton aria-label="增加缩进"><IndentIcon more /></ToolButton>
          </ButtonSet>
        </Row>
      </Rows>
      <Divider />
      <Rows>
        <TextTool $disabled><WrapIcon />自动换行</TextTool>
        <TextTool $disabled><MergeIcon />合并后居中<Caret color={GREY} /></TextTool>
      </Rows>
    </Group>
    <Group label="数字" width={136}>
      <Rows>
        <ComboBox label="数字格式" value="常规" width={128} disabled />
        <Row>
          <ButtonSet>
            <ToolButton $width={32} aria-label="会计数字格式"><CurrencyIcon /><Caret color={GREY} /></ToolButton>
            <ToolButton $width={24} $dim>%</ToolButton>
            <ToolButton $dim><b>,</b></ToolButton>
          </ButtonSet>
          <ButtonSet>
            <ToolButton $width={21} aria-label="增加小数位数"><DecimalIcon /></ToolButton>
            <ToolButton aria-label="减少小数位数"><DecimalIcon less /></ToolButton>
          </ButtonSet>
        </Row>
      </Rows>
    </Group>
    <Group label="样式" width={166} launcher={false}>
      <BigTool $width={52} $disabled>
        <CondIcon />
        条件格式
        <Caret color={GREY} />
      </BigTool>
      <BigTool $width={56} $disabled>
        <TableFormatIcon />
        <span>套用</span>
        <span>表格格式</span>
      </BigTool>
    </Group>
  </Ribbon>
);

const PieChart = () => (
  <Pie width="380" height="190" viewBox="201 300 380 190" role="img" aria-label="金额索赔（万）元">
    <defs>
      <linearGradient id="greenSide"><stop offset="0" stopColor="#83a04b" /><stop offset="1" stopColor="#66803a" /></linearGradient>
      <linearGradient id="redSide"><stop offset="0" stopColor="#863735" /><stop offset="0.8" stopColor="#4f201f" /><stop offset="1" stopColor="#4a1e1d" /></linearGradient>
    </defs>
    <path d="M379 307.500L380 325L377 377L375 355z" fill="#32788c" />
    <path d="M255 363.500L376.500 354.500V377L256 378.500z" fill="#1f434e" />
    <path d="M255 363.500C259 330 310 308 379 307.500L376.500 354.500z" fill="#4bacc6" />
    <path d="M254 402.500L370.500 369V380L264 413V426L257.500 430z" fill="#403152" />
    <path d="M244 379Q246 392 254 402.500L257.500 430Q246 418 244 379z" fill="#6e568f" />
    <path d="M244 379L370.500 369L254 402.500Q246 392 244 379z" fill="#8064a2" />
    <path d="M380.500 375.500L381 402L343.500 472.500L342 444.500z" fill="#7a9245" />
    <path d="M263 410.500Q287 436 342 444.500L343.500 472.500Q290 466 266 437.500z" fill="url(#greenSide)" />
    <path d="M263 410.500L380.500 375.500L342 444.500Q287 436 263 410.500z" fill="#9bbb59" />
    <path d="M371 448Q440 455 492.500 433.500L491 462Q440 485 371.500 477z" fill="url(#redSide)" />
    <path d="M405.500 377.500L492.500 433.500Q440 455 371 448z" fill="#c0504d" />
    <path d="M424 310.500L423 330L427 384V358z" fill="#20364f" />
    <path d="M427 358.500L514 409L510.500 436.500L427 384z" fill="#20344c" />
    <path d="M514 409Q547 395 550.500 371C551 385 549 392 547 401Q540 422 510.500 436.500z" fill="#20344c" />
    <path d="M424 310.500C500 311 551 339 550.500 372C550 389 533 402 514 409L427 359z" fill="#4f81bd" />
    <text x="317" y="342">127.78, 28%</text>
    <text x="492" y="351">183.21, 40%</text>
    <text x="322" y="417">55.71, 12%</text>
    <text x="426" y="433">64.6, 14%</text>
    <text x="229" y="431">29.08,</text>
    <text x="229" y="447">6%</text>
  </Pie>
);

const Chart = () => (
  <ChartFrame>
    <Grip style={{ left: 236, top: 1 }} />
    <Grip style={{ left: 236, bottom: 1 }} />
    <Grip $v style={{ left: 1, top: 141 }} />
    <Grip $v style={{ right: 1, top: 141 }} />
    <ChartBox>
      <ChartTitle>金额索赔（万）元</ChartTitle>
      <PieChart />
      <Legend>
        {legend.map(([name, color]) => <LegendItem key={name} $color={color}>{name}</LegendItem>)}
      </Legend>
    </ChartBox>
    <Corners width="489" height="296" fill="#6f7f81">
      <path d="M2 2h2v2h-2zM6 2h2v2h-2zM2 6h2v2h-2z" />
      <path d="M481 2h2v2h-2zM485 2h2v2h-2zM485 6h2v2h-2z" />
      <path d="M2 288h2v2h-2zM2 292h2v2h-2zM6 292h2v2h-2z" />
    </Corners>
  </ChartFrame>
);

const Handles = () => <><i /><i /><i /><i /></>;

const Spreadsheet = () => (
  <Sheet>
    <colgroup>
      <col />
      {columns.map((c) => <col key={c} />)}
    </colgroup>
    <thead>
      <tr>
        <th aria-label="全选" />
        {columns.map((c) => <th key={c} scope="col">{c}</th>)}
      </tr>
    </thead>
    <tbody>
      {Array.from({ length: 60 }, (_, r) => (
        <tr key={r}>
          <th scope="row">{r + 1}</th>
          {columns.map((c, i) => {
            const value = cells[r]?.[i];
            return (
              <Cell key={c} $boxed={value && r > 0} $cjk={i === 0 || r === 0}>{value}</Cell>
            );
          })}
        </tr>
      ))}
    </tbody>
  </Sheet>
);

const FormatPopup = () => (
  <MiniToolbar>
    <MiniRow>
      <ComboBox label="字体" value="宋体 (正文)" width={68} />
      <ComboBox label="字号" value="10" width={46} />
      <MiniButton $width={22} aria-label="增大字号"><SizeIcon /></MiniButton>
      <MiniButton $width={22} aria-label="减小字号"><SizeIcon small /></MiniButton>
      <MiniButton $width={34} aria-label="填充颜色"><FillIcon /><Caret /></MiniButton>
      <MiniButton $width={34} aria-label="线条颜色"><LineColorIcon /><Caret /></MiniButton>
      <MiniButton aria-label="格式刷"><BrushIcon /></MiniButton>
    </MiniRow>
    <MiniRow>
      <MiniButton><b>B</b></MiniButton>
      <MiniButton><b><i>I</i></b></MiniButton>
      <MiniButton $on aria-label="左对齐"><LinesIcon kind="left" /></MiniButton>
      <MiniButton $on aria-label="居中"><LinesIcon kind="center" /></MiniButton>
      <MiniButton $on aria-label="右对齐"><LinesIcon kind="right" /></MiniButton>
      <MiniButton $width={34} aria-label="字体颜色"><FontColorIcon /><Caret /></MiniButton>
      <MiniButton aria-label="减少缩进"><IndentIcon /></MiniButton>
      <MiniButton aria-label="增加缩进"><IndentIcon more /></MiniButton>
      <MiniButton $width={34} aria-label="项目符号"><BulletsIcon /><Caret color={GREY} /></MiniButton>
    </MiniRow>
  </MiniToolbar>
);

const ContextMenu = () => (
  <Menu>
    {menu.map((item, i) => (item ? (
      <li key={i}>
        <MenuItem disabled={item.disabled} $hot={item.hot}>
          {item.icon}
          <span>{item.text}(<u>{item.hotkey}</u>){item.dots && '...'}</span>
          {item.sub && (
            <SubArrow $split={item.split}>
              <svg width="4" height="8"><path d="M0 0l4 4-4 4z" fill="#8c8c8c" /></svg>
            </SubArrow>
          )}
        </MenuItem>
      </li>
    ) : <li key={i}><hr /></li>))}
  </Menu>
);

const App = () => (
  <>
    <GlobalStyle />
    <Window>
      <Desktop />
      <AppHeader />
      <RibbonBar />
      <FormulaBar>
        <NameBox>
          <input aria-label="名称框" defaultValue="图表 1" />
          <Caret color="#000" />
        </NameBox>
        <FxHandle aria-label="插入函数"><i />fx</FxHandle>
        <FormulaInput aria-label="编辑栏" />
      </FormulaBar>
      <SheetArea>
        <Spreadsheet />
        <Range $x={33} $y={35} $h={91} $color="#9400c8" $sides="1px 0"><Handles /></Range>
        <Range $x={105} $y={18} $h={18} $color="#0a7d0a" $sides="0 1px"><Handles /></Range>
        <Range $x={105} $y={35} $h={91} $color="#0000ff"><Handles /></Range>
        <Chart />
        <Arrow width="92" height="92" viewBox="483 512 92 92">
          <path d="M485 601L561 525L558 521L574 516L569 533L565 529L487 603z" fill="#fb0007" />
        </Arrow>
        <FormatPopup />
        <ContextMenu />
        <Watermark width="160" height="80" viewBox="631 753 160 80">
          <text x="633" y="804" fontSize="32">Bai</text>
          <ellipse cx="691" cy="776" rx="5" ry="7" />
          <ellipse cx="700" cy="766" rx="5" ry="7" />
          <ellipse cx="713" cy="766" rx="5" ry="7" />
          <ellipse cx="722" cy="776" rx="5" ry="7" />
          <path d="M706 778C698 778 685 792 686 798C688 806 698 804 706 804C714 804 724 806 726 798C727 792 714 778 706 778z" />
          <text x="695" y="801" fontSize="19">du</text>
          <text x="728" y="804" fontSize="26">经验</text>
          <text x="636" y="824" fontSize="16" strokeWidth="0.500">jingyan.baidu.com</text>
        </Watermark>
      </SheetArea>
    </Window>
  </>
);

export default App;
